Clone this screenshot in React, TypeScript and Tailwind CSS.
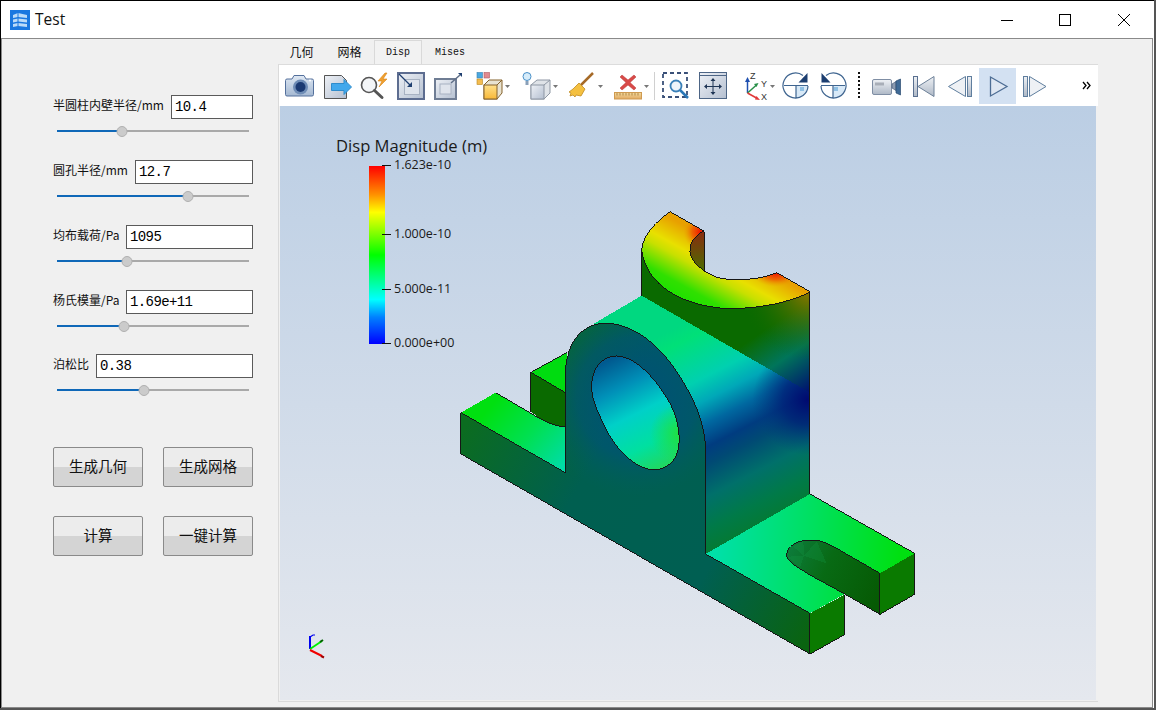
import type { ReactNode } from "react";

const cjk = "font-['Noto_Sans_CJK_SC','Liberation_Sans',sans-serif]";

const params = [
  { label: "半圆柱内壁半径/mm", value: "10.4", inputW: "w-[82px]", pct: 34 },
  { label: "圆孔半径/mm", value: "12.7", inputW: "w-[118px]", pct: 68 },
  { label: "均布载荷/Pa", value: "1095", inputW: "w-[127px]", pct: 36.5 },
  { label: "杨氏模量/Pa", value: "1.69e+11", inputW: "w-[127px]", pct: 35 },
  { label: "泊松比", value: "0.38", inputW: "w-[157px]", pct: 45.5 },
];

function Slider({ pct }: { pct: number }) {
  return (
    <div className="relative ml-1 mt-[6px] flex h-3 w-[192px] items-center">
      <div className="h-[2px] bg-[#0f68b8]" style={{ width: `${pct}%` }} />
      <div className="h-[2px] flex-1 bg-[#a9a9a9]" />
      <div
        className="absolute top-[0.5px] h-[11px] w-[11px] -translate-x-1/2 rounded-full border border-[#b0b0b0] bg-[#cbcbcb]"
        style={{ left: `${pct}%` }}
      />
    </div>
  );
}

function ParamRow({ label, value, inputW, pct }: (typeof params)[number]) {
  return (
    <div>
      <div className="flex h-6 items-center justify-between">
        <span className={`${cjk} -mt-[5px] text-[12px] leading-none whitespace-nowrap text-[#111]`}>{label}</span>
        <input
          readOnly
          value={value}
          className={`${inputW} h-6 border border-[#5a5a5a] bg-white pl-[3px] font-['Liberation_Mono',monospace] text-[14px] tracking-[-0.6px] text-black outline-none`}
        />
      </div>
      <Slider pct={pct} />
    </div>
  );
}

function PushButton({ children }: { children: ReactNode }) {
  return (
    <button className={`${cjk} flex h-10 w-[90px] items-center justify-center rounded-[2px] border border-[#8a8a8a] bg-[linear-gradient(#ececec_0%,#ececec_50%,#d4d4d4_50%,#d4d4d4_100%)] pb-[2px] text-[14.5px] text-[#111]`}>
      {children}
    </button>
  );
}

function Slot({ x, w, children }: { x: number; w: number; children: ReactNode }) {
  return (
    <svg width={w} height={40} viewBox={`${x} 66 ${w} 40`} className="shrink-0">
      {children}
    </svg>
  );
}

function Caret({ x }: { x: number }) {
  return <path d={`M${x} 85h5l-2.5 3z`} fill="#777" />;
}

function IconDefs() {
  return (
    <svg className="absolute h-0 w-0">
      <defs>
        <linearGradient id="blueBody" x1="0" y1="0" x2="0" y2="1">
          <stop offset="0" stopColor="#dfe8f3" />
          <stop offset="1" stopColor="#a4b8d2" />
        </linearGradient>
        <linearGradient id="paleBox" x1="0" y1="0" x2="1" y2="1">
          <stop offset="0" stopColor="#eef1f6" />
          <stop offset="1" stopColor="#b4bfd0" />
        </linearGradient>
        <linearGradient id="goldBox" x1="0" y1="0" x2="0" y2="1">
          <stop offset="0" stopColor="#ffe08a" />
          <stop offset="1" stopColor="#f8b838" />
        </linearGradient>
        <linearGradient id="tri" x1="0" y1="0" x2="0" y2="1">
          <stop offset="0" stopColor="#eef1f5" />
          <stop offset="1" stopColor="#aeb8c6" />
        </linearGradient>
        <linearGradient id="tape" x1="0" y1="0" x2="0" y2="1">
          <stop offset="0" stopColor="#f4dca0" />
          <stop offset="1" stopColor="#e0a860" />
        </linearGradient>
      </defs>
    </svg>
  );
}

function Toolbar() {
  return (
    <div className="relative flex h-[42px] items-end border-t border-[#dcdcdc] bg-white pl-[5px]">
      <IconDefs />
      {/* camera */}
      <Slot x={284} w={37}>
        <path d="M287 79h5l2-3.500h10l2 3.500h6a1.500 1.500 0 0 1 1.500 1.500v14a1.500 1.500 0 0 1-1.500 1.500h-25a1.500 1.500 0 0 1-1.500-1.500v-14a1.500 1.500 0 0 1 1.500-1.500z" fill="url(#blueBody)" stroke="#54709c" />
        <circle cx="300.500" cy="87" r="7.500" fill="#6f8db6" />
        <circle cx="300.500" cy="87" r="5" fill="#1b3a72" />
        <circle cx="310" cy="80.500" r="1" fill="#fff" />
      </Slot>
      {/* export */}
      <Slot x={321} w={37}>
        <path d="M324.500 75.500h17l5 5v18h-22z" fill="url(#paleBox)" stroke="#555" />
        <path d="M331.500 83.500h12.500v-4l7.500 7.500-7.500 7.500v-4h-12.500z" fill="#42a8ec" stroke="#2f8ccc" />
      </Slot>
      {/* pick */}
      <Slot x={358} w={37}>
        <circle cx="369" cy="85" r="7.500" fill="#f3f5f7" stroke="#555" strokeWidth="1.600" />
        <path d="M374.500 90.500l7.500 7" stroke="#555" strokeWidth="3" strokeLinecap="round" />
        <path d="M385 73l-7 8h4l-3 6 8-8h-4l4-6z" fill="#f0a030" stroke="#d88414" strokeWidth="0.6" />
      </Slot>
      {/* zoom to box */}
      <Slot x={395} w={37}>
        <rect x="398" y="73" width="26" height="26" fill="url(#paleBox)" stroke="#5d6d90" strokeWidth="2" />
        <rect x="404.500" y="79.500" width="15" height="15" fill="#dfe4ec" stroke="#a8b2c2" />
        <path d="M399 74l11 11" stroke="#1f3f70" strokeWidth="1.200" />
        <path d="M412 87v-5l-5 5z" fill="#1f3f70" />
      </Slot>
      {/* zoom out box */}
      <Slot x={432} w={37}>
        <rect x="435" y="79" width="21" height="20" fill="url(#paleBox)" stroke="#6f7d94" strokeWidth="2" />
        <rect x="440" y="84" width="11" height="10" fill="#dfe4ec" stroke="#a8b2c2" />
        <path d="M451 83l9-8" stroke="#5f6f88" strokeWidth="1.500" />
        <path d="M458 73h4v4z" fill="#1f3f70" />
      </Slot>
      {/* representation */}
      <Slot x={469} w={47}>
        <rect x="477" y="72.500" width="5.500" height="5.500" fill="#4aa8e0" stroke="#3a80b0" strokeWidth="0.6" />
        <rect x="484" y="72.500" width="5.500" height="5.500" fill="#e08a90" stroke="#b05a60" strokeWidth="0.6" />
        <rect x="477" y="79" width="5.500" height="5.500" fill="#f4bc50" stroke="#b88820" strokeWidth="0.6" />
        <path d="M484 85l5-5h13v13l-5 6h-13z" fill="#e8e2d0" stroke="#85622c" />
        <rect x="484" y="85" width="13" height="14" fill="url(#goldBox)" stroke="#85622c" />
        <path d="M497 85l5-5" stroke="#85622c" />
        <Caret x={505} />
      </Slot>
      {/* light */}
      <Slot x={516} w={47}>
        <circle cx="527" cy="76.500" r="4" fill="#d6ecfa" stroke="#4a90c8" />
        <rect x="525.500" y="81" width="3" height="4" fill="#8aa0b8" />
        <path d="M531 85l6-5h13v13l-6 6h-13z" fill="#dfe3e8" stroke="#8e97a4" />
        <rect x="531" y="85" width="13" height="14" fill="url(#paleBox)" stroke="#8e97a4" />
        <path d="M544 85l6-5" stroke="#8e97a4" />
        <Caret x={553} />
      </Slot>
      {/* clear */}
      <Slot x={563} w={47}>
        <path d="M593 73l-12 12" stroke="#a66a28" strokeWidth="2.500" />
        <path d="M579 83l6 6-4 7-5-1-1 2-2-2-3 1 1-3-2-1 4-3z" fill="#f4c040" stroke="#c08a20" strokeWidth="0.8" />
        <Caret x={598} />
      </Slot>
      {/* ruler */}
      <Slot x={610} w={42}>
        <path d="M622 75l6 5 6-5 2 2-6 5.500 6 5.500-2 2-6-5-6 5-2-2 6-5.500-6-5.500z" fill="#d84a48" stroke="#b83434" strokeWidth="0.5" />
        <rect x="614.500" y="92.500" width="27" height="6.500" fill="url(#tape)" stroke="#cf9a50" />
        <path d="M617 93v2.500M620 93v2.500M623 93v2.500M626 93v2.500M629 93v2.500M632 93v2.500M635 93v2.500M638 93v2.500" stroke="#9a6a28" strokeWidth="0.7" />
        <Caret x={644} />
      </Slot>
      <Slot x={652} w={6}>
        <path d="M654.500 72v28" stroke="#d0d0d0" />
      </Slot>
      {/* zoom rect */}
      <Slot x={658} w={37}>
        <rect x="663" y="73" width="24" height="24" fill="none" stroke="#3a5078" strokeWidth="1.800" strokeDasharray="4 3" />
        <circle cx="676" cy="86" r="5.500" fill="#eef4fa" stroke="#3a80b8" strokeWidth="1.800" />
        <path d="M680 90l8 8" stroke="#2a78b8" strokeWidth="2.500" />
      </Slot>
      {/* reset view */}
      <Slot x={695} w={37}>
        <rect x="699.500" y="72.500" width="27" height="26" fill="url(#paleBox)" stroke="#4d6585" />
        <path d="M700 75.500h26" stroke="#4d6585" />
        <path d="M713 80v13M706 86.500h14" stroke="#1f3555" />
        <path d="M713 78l-2.500 3h5zM713 95l-2.500-3h5zM704 86.500l3-2.500v5zM722 86.500l-3-2.500v5z" fill="#1f3555" />
      </Slot>
      {/* axes */}
      <Slot x={732} w={47}>
        <path d="M747.500 93v-12" stroke="#1f50b0" strokeWidth="1.500" />
        <path d="M747.500 77l-2.500 5h5z" fill="#1f50b0" />
        <path d="M747.500 93l9-8" stroke="#289048" strokeWidth="1.500" />
        <path d="M758.500 83l-4.500 1 2.500 3z" fill="#289048" />
        <path d="M747.500 93l9 5" stroke="#e03838" strokeWidth="1.500" />
        <path d="M760 100l-5-.5 1.500-3.500z" fill="#e03838" />
        <text x="750" y="79" fontSize="9" fontFamily="Liberation Sans, sans-serif" fill="#333">Z</text>
        <text x="761" y="87" fontSize="9" fontFamily="Liberation Sans, sans-serif" fill="#333">Y</text>
        <text x="761" y="100" fontSize="9" fontFamily="Liberation Sans, sans-serif" fill="#333">X</text>
        <Caret x={770} />
      </Slot>
      {/* rotate cw */}
      <Slot x={779} w={37}>
        <path d="M796 86h12a12 12 0 0 1-12 12z" fill="#d8e9f7" />
        <path d="M803 75.500a12.500 12.500 0 1 0 5 10.500M784 85.500h24M796 86v12" fill="none" stroke="#3f6590" strokeWidth="1.200" />
        <path d="M807.500 73v9.500h-9z" fill="#1c3e70" />
        <rect x="800" y="87" width="4" height="4" fill="#8fc0e4" />
      </Slot>
      {/* rotate ccw */}
      <Slot x={816} w={37}>
        <path d="M833 86h12a12 12 0 0 1-12 12z" fill="#d8e9f7" />
        <path d="M826 75.500a12.500 12.500 0 1 1-5 10.500M821 85.500h24M833 86v12" fill="none" stroke="#3f6590" strokeWidth="1.200" />
        <path d="M821.500 73v9.500h9z" fill="#1c3e70" />
        <rect x="834" y="87" width="4" height="4" fill="#8fc0e4" />
      </Slot>
      <Slot x={853} w={13}>
        <path d="M859 72v26" stroke="#111" strokeWidth="2" strokeDasharray="2 2" />
      </Slot>
      {/* animation */}
      <Slot x={866} w={39}>
        <rect x="872.500" y="79.500" width="19" height="15" rx="1.500" fill="url(#tri)" stroke="#7f8ea4" />
        <rect x="875" y="82.500" width="9" height="3" fill="#a8aeb8" />
        <path d="M892 84l4-2.500v9l-4-2.500z" fill="#8a9ab0" stroke="#4a6080" strokeWidth="0.7" />
        <path d="M896 81l4.500-2v16l-4.500-2z" fill="#3f6a96" stroke="#2a4a70" strokeWidth="0.7" />
      </Slot>
      <Slot x={905} w={37}>
        <rect x="913.500" y="76.500" width="4" height="20" fill="url(#tri)" stroke="#5a7090" />
        <path d="M934 76.500v20l-16-10z" fill="url(#tri)" stroke="#6c8098" />
      </Slot>
      <Slot x={942} w={37}>
        <path d="M948.500 86.500l17-10v20z" fill="#eef1f5" stroke="#5f7e9e" />
        <rect x="967.500" y="76.500" width="4" height="20" fill="url(#tri)" stroke="#5f7e9e" />
      </Slot>
      <Slot x={979} w={37}>
        <rect x="979" y="68" width="37" height="36" fill="#d3e1f2" />
        <path d="M990.500 77v19l16.500-9.500z" fill="#dfe7f2" stroke="#4d6d94" strokeWidth="1.300" />
      </Slot>
      <Slot x={1016} w={37}>
        <rect x="1023.500" y="76.500" width="4" height="20" fill="url(#tri)" stroke="#5f7e9e" />
        <path d="M1029.500 76.500v20l16.500-10z" fill="#eef1f5" stroke="#5f7e9e" />
      </Slot>
      <svg width="10" height="9" viewBox="0 0 10 9" className="ml-[29px] shrink-0 self-center">
        <path d="M1 1l3 3.500-3 3.500M5 1l3 3.500-3 3.500" fill="none" stroke="#000" strokeWidth="1.300" />
      </svg>
    </div>
  );
}

function Legend() {
  const ticks = [
    { y: "top-[-7px]", text: "1.623e-10" },
    { y: "top-[62px]", text: "1.000e-10" },
    { y: "top-[117px]", text: "5.000e-11" },
    { y: "top-[171px]", text: "0.000e+00" },
  ];
  return (
    <div className="absolute left-[56px] top-[31px] font-['Open_Sans','DejaVu_Sans',sans-serif] text-[#1a1a1a]">
      <div className="text-[16.600px] leading-[18px] whitespace-nowrap">Disp Magnitude (m)</div>
      <div className="relative mt-[11px] ml-[33px] h-[178px] w-4 bg-[linear-gradient(#ff0000_0%,#ff9000_16%,#ffff00_26%,#00ff00_50%,#00ffff_75%,#0080ff_85%,#0000ff_100%)]">
        {ticks.map((t) => (
          <div key={t.text} className={`absolute left-[13px] ${t.y} flex h-[13px] items-center`}>
            <div className="h-px w-[9px] bg-[#111]" />
            <span className="ml-[3px] text-[12.500px] leading-none whitespace-nowrap">{t.text}</span>
          </div>
        ))}
      </div>
    </div>
  );
}

function Triad() {
  return (
    <svg width="24" height="30" viewBox="0 0 24 30" className="absolute left-[26px] top-[526px]">
      <path d="M4 17V4" stroke="#0000f0" strokeWidth="2" />
      <path d="M4 5l3-2h2" fill="none" stroke="#0000f0" strokeWidth="1.200" />
      <path d="M4 17l12-8" stroke="#00f000" strokeWidth="1.800" />
      <path d="M14 10l3-2" stroke="#006000" strokeWidth="2" />
      <path d="M4 18l12 6" stroke="#f00000" strokeWidth="2" />
      <path d="M15 24l3 1.500" stroke="#a00000" strokeWidth="2" />
    </svg>
  );
}

function Model() {
  const edge = { fill: "none", stroke: "#161616", strokeWidth: 3 };
  const arch = "M346 818 L346 520 C348 440 385 375 460 370 C560 368 640 450 690 530 C740 610 767 680 767 760 L767 1062";
  const hole = "M425 560 C425 500 460 468 500 468 C560 470 620 540 660 610 C680 650 690 690 687 730 C685 780 650 810 610 810 C550 805 490 740 460 670 C435 620 425 590 425 560 Z";
  const saddle = "M575 150 C580 100 620 65 660 35 L762 93 C735 105 718 130 720 155 C725 190 760 215 800 232 C850 245 930 240 980 218 L1080 275 C1040 300 930 330 820 325 C700 315 590 260 575 150 Z";
  const slot = "M1010 1065 C1010 1040 1040 1020 1080 1020 C1120 1020 1140 1035 1160 1045 L1290 1120 L1290 1243 L1184 1182 L1080 1125 C1040 1100 1010 1085 1010 1065 Z";
  return (
    <svg width="816" height="594" viewBox="280 106 816 594" className="absolute inset-0">
      <defs>
        <linearGradient id="front" gradientUnits="userSpaceOnUse" x1="33" y1="700" x2="1080" y2="1300">
          <stop offset="0" stopColor="#0b6c20" />
          <stop offset="0.32" stopColor="#005f50" />
          <stop offset="0.7" stopColor="#005f52" />
          <stop offset="1" stopColor="#0a6410" />
        </linearGradient>
        <radialGradient id="frontBlue" gradientUnits="userSpaceOnUse" cx="560" cy="590" r="300">
          <stop offset="0" stopColor="#004f78" stopOpacity="0.95" />
          <stop offset="0.6" stopColor="#00527a" stopOpacity="0.6" />
          <stop offset="1" stopColor="#005f60" stopOpacity="0" />
        </radialGradient>
        <linearGradient id="cyl" gradientUnits="userSpaceOnUse" x1="680" y1="380" x2="1040" y2="1080">
          <stop offset="0" stopColor="#00d880" />
          <stop offset="0.06" stopColor="#00e078" />
          <stop offset="0.22" stopColor="#00d0b0" />
          <stop offset="0.3" stopColor="#00a8b8" />
          <stop offset="0.38" stopColor="#0068a0" />
          <stop offset="0.46" stopColor="#003c80" />
          <stop offset="0.52" stopColor="#004a74" />
          <stop offset="0.63" stopColor="#00706a" />
          <stop offset="0.74" stopColor="#007a48" />
          <stop offset="0.9" stopColor="#087a20" />
        </linearGradient>
        <radialGradient id="cylNavy" gradientUnits="userSpaceOnUse" cx="1072" cy="600" r="165">
          <stop offset="0" stopColor="#000a70" />
          <stop offset="0.45" stopColor="#001f78" stopOpacity="0.75" />
          <stop offset="1" stopColor="#003c80" stopOpacity="0" />
        </radialGradient>
        <linearGradient id="wall" gradientUnits="userSpaceOnUse" x1="930" y1="400" x2="1060" y2="590">
          <stop offset="0" stopColor="#0a6a00" />
          <stop offset="0.45" stopColor="#00755a" />
          <stop offset="1" stopColor="#000f70" />
        </linearGradient>
        <radialGradient id="wallOlive" gradientUnits="userSpaceOnUse" cx="1080" cy="270" r="210">
          <stop offset="0" stopColor="#a07800" stopOpacity="0.95" />
          <stop offset="1" stopColor="#0a6a00" stopOpacity="0" />
        </radialGradient>
        <linearGradient id="saddle" gradientUnits="userSpaceOnUse" x1="690" y1="330" x2="800" y2="130">
          <stop offset="0" stopColor="#10e000" />
          <stop offset="0.3" stopColor="#30e000" />
          <stop offset="0.6" stopColor="#c8e000" />
          <stop offset="0.72" stopColor="#e8e000" />
          <stop offset="1" stopColor="#e8a000" />
        </linearGradient>
        <radialGradient id="redA" gradientUnits="userSpaceOnUse" cx="752" cy="96" r="52">
          <stop offset="0" stopColor="#f01000" />
          <stop offset="0.5" stopColor="#f05000" stopOpacity="0.75" />
          <stop offset="1" stopColor="#e8a000" stopOpacity="0" />
        </radialGradient>
        <radialGradient id="redB" gradientUnits="userSpaceOnUse" cx="978" cy="218" r="60" gradientTransform="translate(978 218) scale(1.2 0.7) translate(-978 -218)">
          <stop offset="0" stopColor="#f01000" />
          <stop offset="0.5" stopColor="#f05000" stopOpacity="0.75" />
          <stop offset="1" stopColor="#e8a000" stopOpacity="0" />
        </radialGradient>
        <linearGradient id="bore" gradientUnits="userSpaceOnUse" x1="480" y1="480" x2="640" y2="800">
          <stop offset="0" stopColor="#005a90" />
          <stop offset="0.25" stopColor="#0090b8" />
          <stop offset="0.5" stopColor="#00d0c8" />
          <stop offset="0.78" stopColor="#00e0a0" />
          <stop offset="1" stopColor="#20d860" />
        </linearGradient>
        <radialGradient id="boreGreen" gradientUnits="userSpaceOnUse" cx="690" cy="700" r="90">
          <stop offset="0" stopColor="#20e040" />
          <stop offset="1" stopColor="#20e040" stopOpacity="0" />
        </radialGradient>
        <linearGradient id="notch" x1="0" y1="0" x2="0" y2="1">
          <stop offset="0" stopColor="#8a2a10" />
          <stop offset="1" stopColor="#4a6e00" />
        </linearGradient>
        <linearGradient id="leftTop" gradientUnits="userSpaceOnUse" x1="130" y1="610" x2="340" y2="800">
          <stop offset="0" stopColor="#00e010" />
          <stop offset="0.5" stopColor="#00e050" />
          <stop offset="1" stopColor="#00dca8" />
        </linearGradient>
        <linearGradient id="rightTop" gradientUnits="userSpaceOnUse" x1="800" y1="1040" x2="1350" y2="1090">
          <stop offset="0" stopColor="#00e0a8" />
          <stop offset="0.5" stopColor="#00e060" />
          <stop offset="1" stopColor="#00e010" />
        </linearGradient>
        <linearGradient id="slotWall" gradientUnits="userSpaceOnUse" x1="1020" y1="1060" x2="1290" y2="1180">
          <stop offset="0" stopColor="#0c7a38" />
          <stop offset="0.4" stopColor="#086a14" />
          <stop offset="1" stopColor="#065a04" />
        </linearGradient>
      </defs>
      <g transform="translate(450 200) scale(0.33333)" shapeRendering="crispEdges">
        {/* rear block */}
        <path d="M243 517 L352 457 L352 580 Z" fill="#00dc10" />
        <path d="M243 517 L346 578 L346 680 C310 680 270 660 243 635 Z" fill="#0a6a00" />
        {/* bearing saddle */}
        <path d="M575 150 C590 260 700 315 820 325 C930 330 1040 300 1080 275 L1080 578 L575 287 Z" fill="url(#wall)" />
        <path d="M575 150 C590 260 700 315 820 325 C930 330 1040 300 1080 275 L1080 578 L575 287 Z" fill="url(#wallOlive)" />
        <path d="M762 93 L765 215 C735 195 718 175 720 150 C720 125 740 100 762 93 Z" fill="url(#notch)" />
        <path d={saddle} fill="url(#saddle)" />
        <path d={saddle} fill="url(#redA)" />
        <path d={saddle} fill="url(#redB)" />
        {/* cylinder side */}
        <path d="M430 372 L575 287 L1080 578 L1080 882 L767 1062 L767 760 L600 500 Z" fill="url(#cyl)" />
        <path d="M430 372 L575 287 L1080 578 L1080 882 L767 1062 L767 760 L600 500 Z" fill="url(#cylNavy)" />
        {/* foot plates */}
        <path d="M33 638 L137 578 L243 640 C280 665 320 680 346 680 L346 818 Z" fill="url(#leftTop)" />
        <path d="M767 1062 L1080 882 L1394 1060 L1290 1120 L1184 1182 L1080 1240 Z" fill="url(#rightTop)" />
        <path d={slot} fill="url(#slotWall)" />
        <path d="M1030 1040 L1062 1068 L1060 1022 Z M1012 1070 L1062 1068 L1050 1104 Z M1100 1024 L1062 1068 L1130 1090 Z" fill="#159a48" fillOpacity="0.25" />
        <path d="M1290 1120 L1394 1060 L1394 1183 L1290 1243 Z" fill="#0a7a00" />
        <path d="M1080 1240 L1184 1184 L1184 1304 L1080 1362 Z" fill="#0a7a00" />
        {/* front face */}
        <path d="M33 638 L346 818 L346 520 C348 440 385 375 460 370 C560 368 640 450 690 530 C740 610 767 680 767 760 L767 1062 L1080 1240 L1080 1362 L33 762 Z" fill="url(#front)" />
        <path d="M346 818 L346 520 C348 440 385 375 460 370 C560 368 640 450 690 530 C740 610 767 680 767 760 L767 900 L346 900 Z" fill="url(#frontBlue)" />
        <path d={hole} fill="url(#bore)" />
        <path d={hole} fill="url(#boreGreen)" />
        {/* edges */}
        <path d={hole} {...edge} />
        <path d={arch} {...edge} />
        <path d="M33 638 L346 818 M33 638 L33 762 L1080 1362 L1080 1240 L767 1062" {...edge} />
        <path d="M137 578 L243 640 C280 665 320 680 346 680 M243 517 L243 635 M243 517 L346 578 M243 517 L352 457" {...edge} />
        <path d="M575 150 L575 287 M1080 275 L1080 882 M1080 882 L1394 1060 L1394 1183 L1290 1243 L1290 1120 M1080 1362 L1184 1304 L1184 1184" {...edge} />
        <path d={saddle} {...edge} />
        <path d="M762 93 L765 215" {...edge} />
        <path d={slot} {...edge} />
      </g>
    </svg>
  );
}

function Viewport() {
  return (
    <div className="relative ml-px h-[594px] w-[816px] bg-linear-to-b from-[#bbcee4] to-[#e5e8ee]">
      <Model />
      <Legend />
      <Triad />
    </div>
  );
}

export default function App() {
  return (
    <div className="flex h-[710px] w-[1156px] flex-col overflow-hidden bg-[#555] font-['Liberation_Sans',sans-serif]">
      <div className="mr-[2px] mb-[2px] flex min-h-0 flex-1 flex-col border-t border-l border-black bg-white pr-px">
        {/* title bar */}
        <div className="flex h-[37px] shrink-0 items-center bg-white pl-[9px]">
          <svg width="20" height="20" viewBox="0 0 20 20" className="shrink-0">
            <rect width="20" height="20" fill="#1a78e0" />
            <path d="M3 5l5-2 9 2v3l-9-1-5 1zM3 9.500l5-1 9 1v3l-9-1-5 1zM3 14l5-1 9 1v3l-9-1-5 1z" fill="#bcdcf8" />
            <path d="M8 3v13" stroke="#1a78e0" />
          </svg>
          <span className="ml-[5px] font-['Open_Sans',sans-serif] text-[15.500px] text-[#111]">Test</span>
          <div className="ml-auto flex items-center">
            <svg width="14" height="14" viewBox="0 0 14 14" className="mr-[44px]">
              <path d="M1 7.500h12" stroke="#000" />
            </svg>
            <svg width="14" height="14" viewBox="0 0 14 14" className="mr-[45px]">
              <rect x="1.500" y="1.500" width="11" height="11" fill="none" stroke="#000" />
            </svg>
            <svg width="14" height="14" viewBox="0 0 14 14" className="mr-[22px]">
              <path d="M1 1l12 12M13 1L1 13" stroke="#000" />
            </svg>
          </div>
        </div>
        {/* client area */}
        <div className="flex min-h-0 flex-1 border border-[#8a8a8a] bg-[#f0f0f0]">
          <div className="w-[276px] shrink-0 pt-[56px] pl-[51px]">
            <div className="flex w-[200px] flex-col gap-[23px]">
              {params.slice(0, 4).map((p) => (
                <ParamRow key={p.label} {...p} />
              ))}
            </div>
            <div className="mt-[22px] w-[200px]">
              <ParamRow {...params[4]} />
            </div>
            <div className="mt-[51px] grid w-[200px] grid-cols-2 gap-x-5 gap-y-[29px]">
              <PushButton>生成几何</PushButton>
              <PushButton>生成网格</PushButton>
              <PushButton>计算</PushButton>
              <PushButton>一键计算</PushButton>
            </div>
          </div>
          <div className="flex w-[820px] flex-col pt-px">
            <div className="flex h-[24px] items-stretch text-[12px] text-[#111]">
              <div className={`${cjk} flex w-[47px] items-center justify-center`}>几何</div>
              <div className={`${cjk} flex w-[49px] items-center justify-center`}>网格</div>
              <div className="flex w-[48px] items-center justify-center border border-b-0 border-[#d9d9d9] bg-[#f2f2f2] font-['Liberation_Mono',monospace] text-[10px]">Disp</div>
              <div className="flex w-[56px] items-center justify-center font-['Liberation_Mono',monospace] text-[10px]">Mises</div>
            </div>
            <div className="border-b border-l border-[#dadada] pb-px">
              <Toolbar />
              <Viewport />
            </div>
          </div>
        </div>
      </div>
    </div>
  );
}
